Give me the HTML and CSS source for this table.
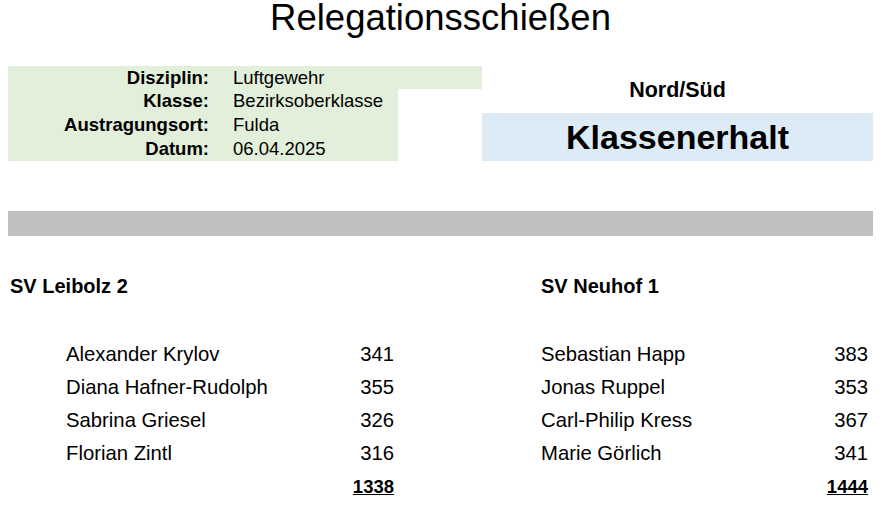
FILE: index.html
```html
<!DOCTYPE html>
<html lang="de">
<head>
    <meta charset="UTF-8">
    <meta name="viewport" content="width=device-width, initial-scale=1.0">
    <title>Relegationsschießen</title>
    <link rel="stylesheet" href="styles.css">
</head>
<body>
    <div class="blatt">
        <h1 class="titel">Relegationsschießen</h1>

        <div class="kopf">
            <div class="info">
                <div class="info-zeile breit">
                    <span class="label">Disziplin:</span>
                    <span class="wert">Luftgewehr</span>
                </div>
                <div class="info-zeile">
                    <span class="label">Klasse:</span>
                    <span class="wert">Bezirksoberklasse</span>
                </div>
                <div class="info-zeile">
                    <span class="label">Austragungsort:</span>
                    <span class="wert">Fulda</span>
                </div>
                <div class="info-zeile">
                    <span class="label">Datum:</span>
                    <span class="wert">06.04.2025</span>
                </div>
            </div>

            <div class="runde">
                <div class="gruppe">Nord/Süd</div>
                <div class="ziel">Klassenerhalt</div>
            </div>
        </div>

        <div class="trenner"></div>

        <div class="mannschaften">
            <div class="team links">
                <div class="team-name">SV Leibolz 2</div>
                <div class="schuetzen">
                    <div class="zeile"><span>Alexander Krylov</span><span>341</span></div>
                    <div class="zeile"><span>Diana Hafner-Rudolph</span><span>355</span></div>
                    <div class="zeile"><span>Sabrina Griesel</span><span>326</span></div>
                    <div class="zeile"><span>Florian Zintl</span><span>316</span></div>
                    <div class="zeile summe"><span></span><span>1338</span></div>
                </div>
            </div>

            <div class="team rechts">
                <div class="team-name">SV Neuhof 1</div>
                <div class="schuetzen">
                    <div class="zeile"><span>Sebastian Happ</span><span>383</span></div>
                    <div class="zeile"><span>Jonas Ruppel</span><span>353</span></div>
                    <div class="zeile"><span>Carl-Philip Kress</span><span>367</span></div>
                    <div class="zeile"><span>Marie Görlich</span><span>341</span></div>
                    <div class="zeile summe"><span></span><span>1444</span></div>
                </div>
            </div>
        </div>
    </div>
</body>
</html>
```

FILE: styles.css
```css
body {
    margin: 0;
    background-color: #fff;
    color: #000;
    font-family: "Liberation Sans", Arial, sans-serif;
}

.blatt {
    width: 865px;
    padding-left: 8px;
}

.titel {
    margin: 0;
    padding-top: 1px;
    font-size: 36.5px;
    font-weight: normal;
    line-height: 34px;
    text-align: center;
}

/* Kopfbereich mit Infos und Runde */
.kopf {
    display: flex;
    margin-top: 31px;
}

.info {
    width: 474px;
    font-size: 18.5px;
}

.info-zeile {
    display: flex;
    align-items: center;
    width: 390px;
    height: 24px;
    background-color: #e2efda;
}

.info-zeile.breit {
    width: 100%;
    height: 23px;
}

.label {
    width: 201px;
    font-weight: bold;
    text-align: right;
}

.wert {
    margin-left: 24px;
}

.runde {
    flex: 1;
    padding-top: 12px;
    text-align: center;
}

.gruppe {
    font-size: 21.5px;
    font-weight: bold;
    line-height: 24px;
}

.ziel {
    margin-top: 11px;
    height: 48px;
    line-height: 48px;
    background-color: #ddebf7;
    font-size: 34px;
    font-weight: bold;
}

.trenner {
    height: 25px;
    margin-top: 50px;
    background-color: #bfbfbf;
}

/* Mannschaften */
.mannschaften {
    display: flex;
    margin-top: 38px;
}

.team.links {
    width: 386px;
}

.team.rechts {
    width: 327px;
    margin-left: 147px;
}

.team-name {
    font-size: 20px;
    font-weight: bold;
    line-height: 24px;
}

.links .team-name {
    padding-left: 2px;
}

.schuetzen {
    margin-top: 40px;
    font-size: 20.3px;
}

.links .schuetzen {
    padding-left: 58px;
}

.zeile {
    display: flex;
    justify-content: space-between;
    line-height: 33px;
}

.summe {
    font-size: 18.5px;
    font-weight: bold;
    text-decoration: underline;
}
```
